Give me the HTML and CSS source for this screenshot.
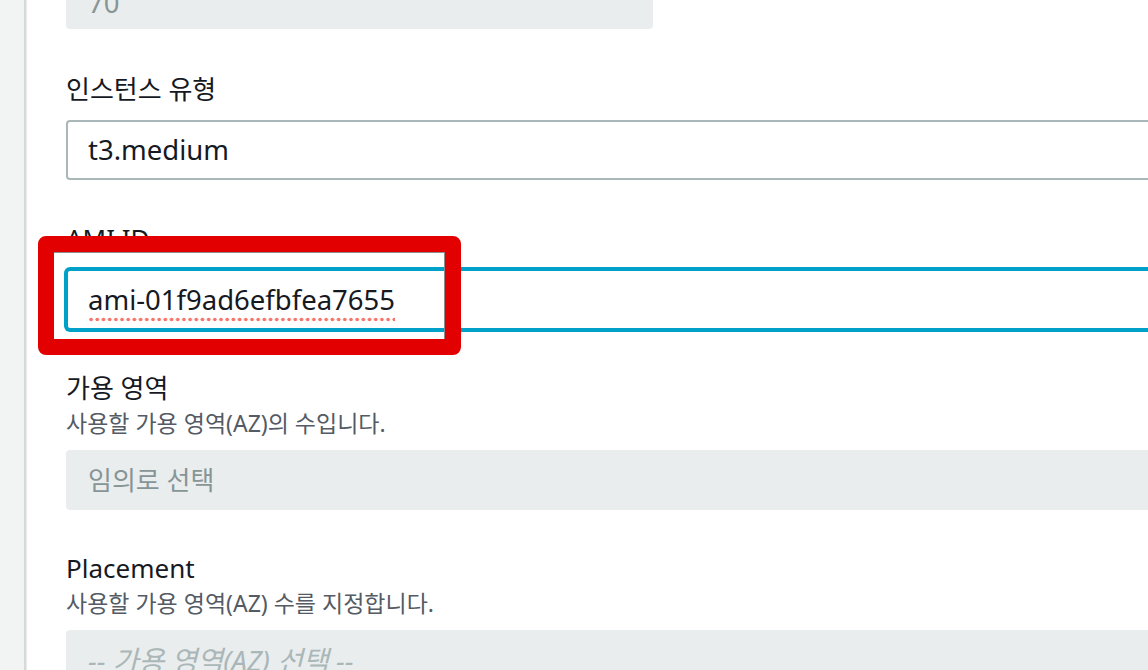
FILE: index.html
```html
<!DOCTYPE html>
<html lang="ko">
<head>
<meta charset="utf-8">
<link rel="stylesheet" href="styles.css">
</head>
<body>
<div class="page">
  <aside class="rail"></aside>
  <main class="form">
    <div class="field field-top">
      <div class="row">
        <div class="input disabled short"><span class="latin">70</span></div>
        <span class="unit">%</span>
      </div>
    </div>

    <div class="field">
      <div class="label">인스턴스 유형</div>
      <div class="input"><span class="latin">t3.medium</span></div>
    </div>

    <div class="field field-ami">
      <div class="label">AMI ID</div>
      <div class="input focused"><span class="latin spell">ami-01f9ad6efbfea7655</span></div>
      <div class="highlight"></div>
    </div>

    <div class="field">
      <div class="label with-desc">가용 영역</div>
      <div class="desc">사용할 가용 영역(AZ)의 수입니다.</div>
      <div class="input disabled">임의로 선택</div>
    </div>

    <div class="field">
      <div class="label with-desc">Placement</div>
      <div class="desc">사용할 가용 영역(AZ) 수를 지정합니다.</div>
      <div class="input disabled placeholder">-- 가용 영역(AZ) 선택 --</div>
    </div>
  </main>
</div>
</body>
</html>
```

FILE: styles.css
```css
* { box-sizing: border-box; }
html, body {
  margin: 0;
  padding: 0;
  background: #ffffff;
  overflow: hidden;
  height: 670px;
}
body {
  font-family: "Noto Sans", "Noto Sans CJK KR", sans-serif;
  color: #16191f;
}
.page {
  display: flex;
  height: 670px;
}
.rail {
  flex: 0 0 26px;
  background: #f2f3f3;
  border-right: 2px solid #d5dbdb;
  box-shadow: 1px 0 1px rgba(0,0,0,0.08);
}
.form {
  flex: 1;
  padding-left: 40px;
  min-width: 0;
}
.field {
  position: relative;
  margin-bottom: 40px;
}
.field-top {
  margin-top: -31px;
  margin-bottom: 42px;
}
.row {
  display: flex;
  align-items: flex-start;
}
.unit {
  margin-left: 29px;
  font-size: 26px;
  line-height: 26px;
  margin-top: 3px;
  color: #16191f;
}
.label {
  font-size: 26px;
  line-height: 36px;
  margin-bottom: 13px;
}
.label.with-desc { margin-bottom: 2px; }
.desc {
  font-size: 23px;
  line-height: 30px;
  color: #545b64;
  margin-bottom: 12px;
}
.input {
  width: 1140px;
  height: 60px;
  border: 2px solid #aab7b8;
  border-radius: 4px;
  padding: 0 20px;
  font-size: 26px;
  line-height: 56px;
  color: #16191f;
  white-space: nowrap;
  overflow: hidden;
  background: #ffffff;
}
.latin { font-size: 27.5px; }
.input.short { width: 587px; }
.input.disabled {
  background: #eaeded;
  border-color: #eaeded;
  color: #879596;
}
.input.short .latin { position: relative; top: 4px; }
.input.placeholder {
  font-style: italic;
  font-size: 28px;
  color: #aab7b8;
}
.input.focused {
  border-color: #00a1c9;
  box-shadow: 0 0 0 2px #00a1c9;
  height: 61px;
  line-height: 57px;
}
.spell {
  padding-bottom: 4px;
  background-image: radial-gradient(circle, #f4776b 1.6px, transparent 2.1px);
  background-size: 6.2px 5px;
  background-repeat: repeat-x;
  background-position: 0 100%;
}
.highlight {
  position: absolute;
  left: -28px;
  top: 16px;
  width: 423px;
  height: 119px;
  border: 16px solid #e20000;
  border-radius: 8px;
  box-shadow: inset -1px 1px 0 #8c8c8c;
  pointer-events: none;
}
```
